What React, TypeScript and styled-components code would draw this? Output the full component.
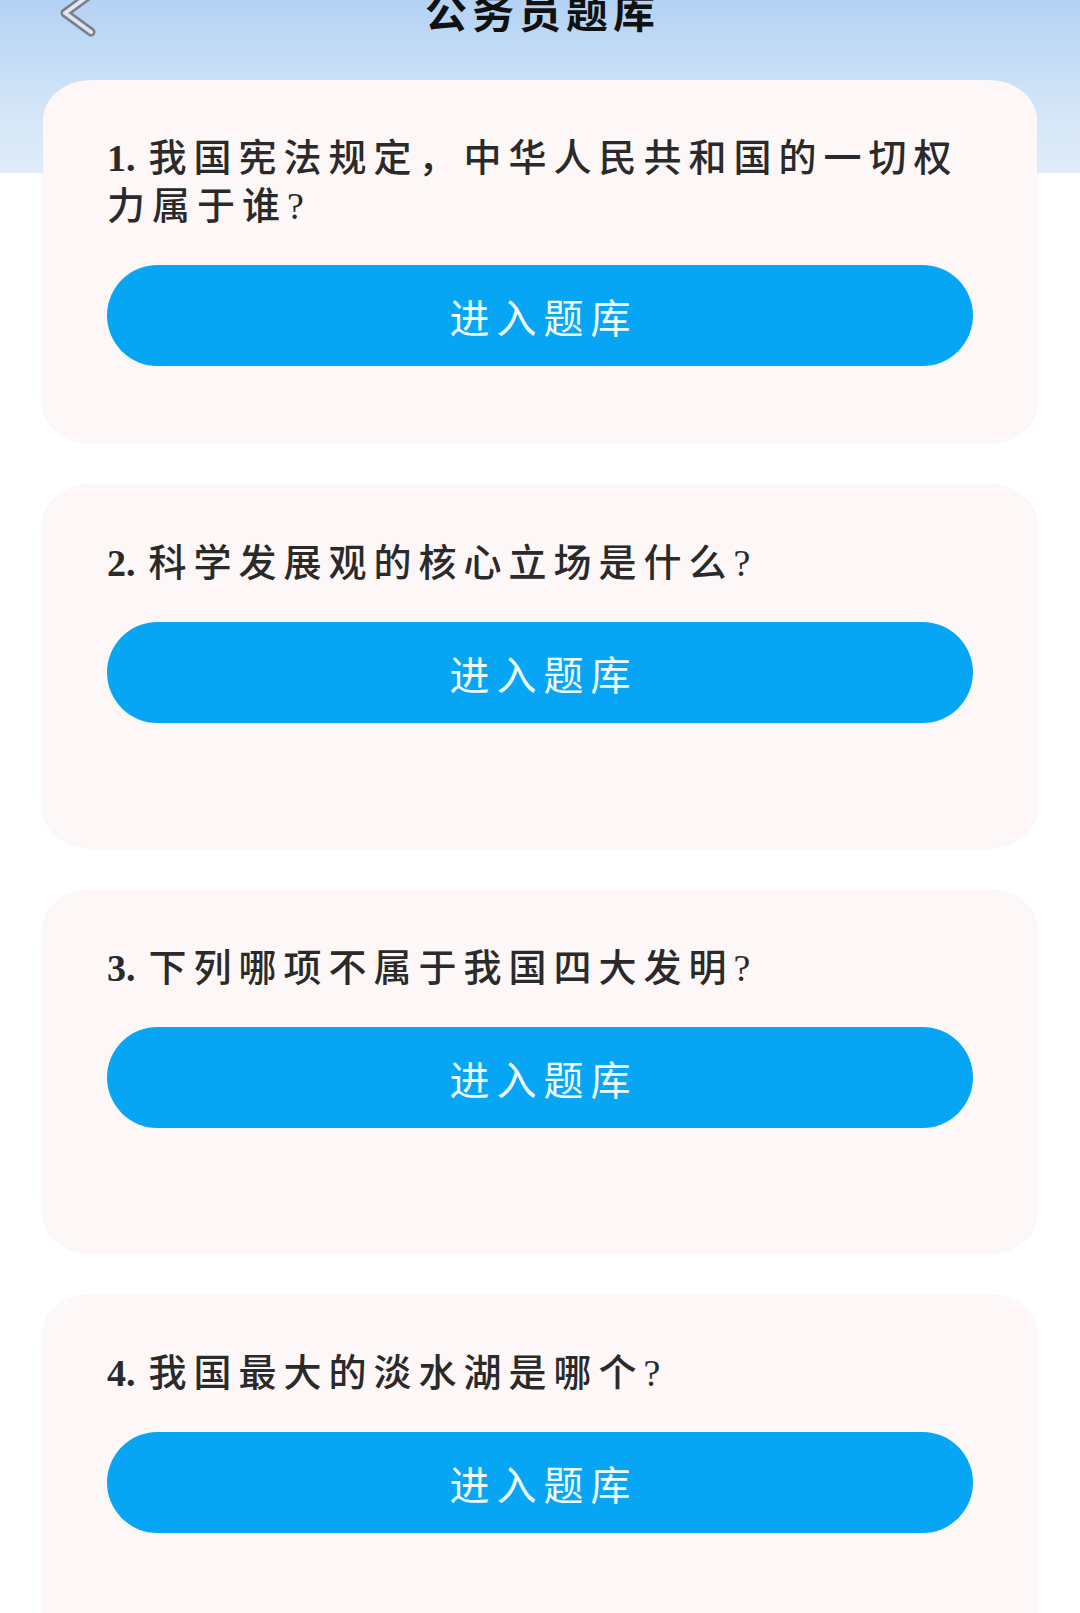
import styled, { createGlobalStyle } from 'styled-components';

const GlobalStyle = createGlobalStyle`
    html, body {
        margin: 0;
        padding: 0;
        background: #ffffff;
    }
    * {
        box-sizing: border-box;
    }
`

const questions = [
    '我国宪法规定，中华人民共和国的一切权力属于谁?',
    '科学发展观的核心立场是什么?',
    '下列哪项不属于我国四大发明?',
    '我国最大的淡水湖是哪个?',
];

const App = () => {
    return (
        <Page>
            <GlobalStyle />
            <Header>
                <BackButton aria-label="返回">
                    <svg width="40" height="28" viewBox="0 0 40 28">
                        <path d="M31 -6 L5 13 L31 32" fill="none" stroke="#7a818a" strokeWidth="9" strokeLinecap="round" strokeLinejoin="round" />
                        <path d="M31 -6 L5 13 L31 32" fill="none" stroke="#dfe7f0" strokeWidth="4" strokeLinecap="round" strokeLinejoin="round" />
                    </svg>
                </BackButton>
                <Title>公务员题库</Title>
                <span />
            </Header>
            <CardList>
                {questions.map((q, i) =>
                    <Card key={q}>
                        <Question>
                            <Num>{i + 1}.</Num>
                            {q}
                        </Question>
                        <EnterButton>进入题库</EnterButton>
                    </Card>
                )}
            </CardList>
        </Page>
    );
}

export default App;

const Page = styled.div`
    width: 1080px;
    height: 1613px;
    overflow: hidden;
    background: linear-gradient(to bottom, #b4d2f4 0px, #d6e7f8 120px, #e0ecf9 173px, #ffffff 173px);
    font-family: "Noto Sans CJK SC", "Noto Sans", sans-serif;
`

const Header = styled.div`
    display: grid;
    grid-template-columns: 1fr auto 1fr;
    align-items: start;
    height: 80px;
`

const BackButton = styled.div`
    display: flex;
    height: 28px;
    padding-left: 60px;
    svg {
        overflow: visible;
    }
`

const Title = styled.h1`
    margin: 0;
    padding-left: 5px;
    font-size: 42px;
    line-height: 20px;
    font-weight: 700;
    letter-spacing: 5px;
    color: #111111;
`

const CardList = styled.div`
    display: flex;
    flex-direction: column;
    gap: 42px;
    padding: 0 43px;
`

const Card = styled.div`
    height: 363px;
    flex-shrink: 0;
    display: flex;
    flex-direction: column;
    gap: 35px;
    padding: 54px 64px 0;
    background: #fdf8f7;
    border-radius: 48px / 40px;
    box-shadow: 0 0 2px rgba(230, 220, 218, 0.6);
`

const Question = styled.p`
    margin: 0;
    font-family: "Liberation Serif", "Noto Sans CJK SC", serif;
    font-size: 38px;
    line-height: 48px;
    font-weight: 500;
    letter-spacing: 7px;
    color: #2a2a2a;
`

const Num = styled.span`
    font-weight: 700;
    letter-spacing: 0;
    margin-right: 13px;
`

const EnterButton = styled.button`
    height: 101px;
    width: 100%;
    border: none;
    border-radius: 60px;
    background: #07a6f5;
    color: #effbff;
    font-family: "Noto Sans CJK SC", "Noto Sans", sans-serif;
    font-size: 40px;
    font-weight: 400;
    letter-spacing: 7px;
    padding: 0 0 0 7px;
    cursor: pointer;
`
